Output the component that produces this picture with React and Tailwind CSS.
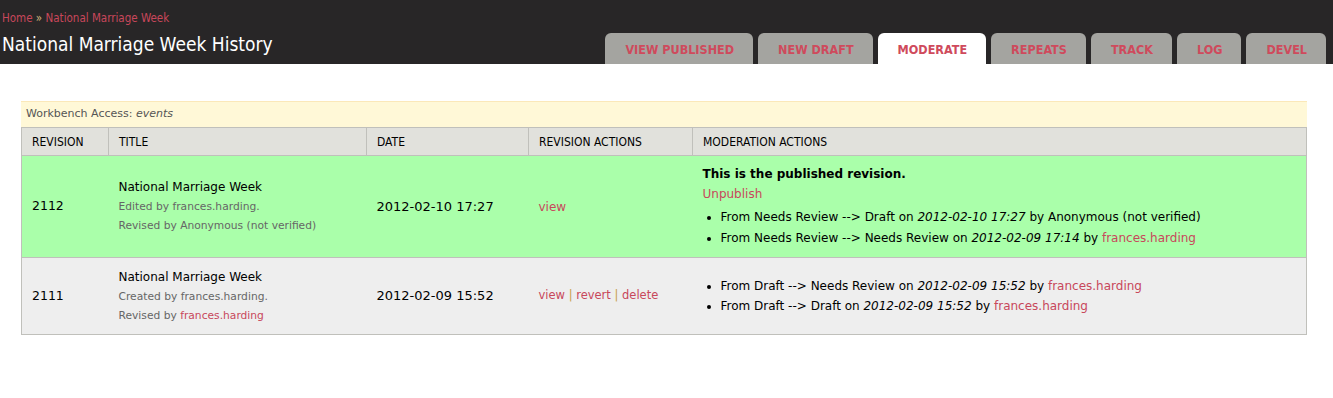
const tabs = ['View published', 'New draft', 'Moderate', 'Repeats', 'Track', 'Log', 'Devel']

function Link({ children }) {
  return <a className="text-[#c8475b] no-underline">{children}</a>
}

export default function App() {
  return (
    <div className="min-h-screen bg-white font-['DejaVu_Sans',sans-serif] text-black">
      {/* Header */}
      <header className="h-16 bg-[#282627] flex items-end justify-between">
        <div className="pl-[2px] pb-[10px]">
          <div className="text-[11.5px] leading-none mb-[11px] font-['DejaVu_Sans_Condensed',sans-serif]">
            <Link>Home</Link> <span className="text-[#cbb27a]">»</span> <Link>National Marriage Week</Link>
          </div>
          <h1 className="text-[19px] leading-none text-white font-['DejaVu_Sans_Condensed',sans-serif]">
            National Marriage Week History
          </h1>
        </div>
        <nav className="flex gap-[5px] pr-[7px]">
          {tabs.map((t) => (
            <a
              key={t}
              className={`h-[31px] flex items-center pt-[3px] pl-[20px] pr-[19px] rounded-t-[6px] text-[12.5px] font-bold uppercase text-[#cf4a5c] font-['DejaVu_Sans_Condensed',sans-serif] ${
                t === 'Moderate' ? 'bg-white' : 'bg-[#a4a4a0]'
              }`}
            >
              {t}
            </a>
          ))}
        </nav>
      </header>

      <main className="px-[21px] pt-[37px] pr-[26px]">
        <div className="h-[26px] bg-[#fff8d7] border-t border-[#fbe8b9] flex items-center px-[5px] text-[11px] text-[#555]">
          Workbench Access:&nbsp;<em>events</em>
        </div>
        <table className="w-full border-collapse text-[12px]">
          <thead>
            <tr className="h-[28px] bg-[#e1e1dc] text-left uppercase font-['DejaVu_Sans_Condensed',sans-serif]">
              <th className="font-normal px-[10px] w-[87px] border border-[#c0c0bb]">Revision</th>
              <th className="font-normal px-[10px] w-[258px] border border-[#c0c0bb]">Title</th>
              <th className="font-normal px-[10px] w-[162px] border border-[#c0c0bb]">Date</th>
              <th className="font-normal px-[10px] w-[164px] border border-[#c0c0bb]">Revision actions</th>
              <th className="font-normal px-[10px] border border-[#c0c0bb]">Moderation actions</th>
            </tr>
          </thead>
          <tbody>
            <tr className="h-[102px] bg-[#aaffaa] border-x border-[#c0c0bb]">
              <td className="px-[10px] text-[12.5px]">2112</td>
              <td className="px-[10px] leading-[19px]">
                <div>National Marriage Week</div>
                <div className="text-[10.7px] text-[#666]">Edited by frances.harding.</div>
                <div className="text-[10.7px] text-[#666]">Revised by Anonymous (not verified)</div>
              </td>
              <td className="px-[10px] text-[13px]">2012-02-10 17:27</td>
              <td className="px-[10px]">
                <Link>view</Link>
              </td>
              <td className="px-[10px] leading-[20px]">
                <div className="font-bold">This is the published revision.</div>
                <div>
                  <Link>Unpublish</Link>
                </div>
                <ul className="list-disc pl-[18px] mt-[3px] leading-[21px]">
                  <li>
                    From Needs Review --&gt; Draft on <em>2012-02-10 17:27</em> by Anonymous (not verified)
                  </li>
                  <li>
                    From Needs Review --&gt; Needs Review on <em>2012-02-09 17:14</em> by <Link>frances.harding</Link>
                  </li>
                </ul>
              </td>
            </tr>
            <tr className="h-[77px] bg-[#eeeeee] border border-[#c0c0bb]">
              <td className="px-[10px] text-[12.5px]">2111</td>
              <td className="px-[10px] leading-[19px]">
                <div>National Marriage Week</div>
                <div className="text-[10.7px] text-[#666]">Created by frances.harding.</div>
                <div className="text-[10.7px] text-[#666]">
                  Revised by <Link>frances.harding</Link>
                </div>
              </td>
              <td className="px-[10px] text-[13px]">2012-02-09 15:52</td>
              <td className="px-[10px] text-[11.5px]">
                <Link>view</Link> <span className="text-[#c8a04b]">|</span> <Link>revert</Link>{' '}
                <span className="text-[#c8a04b]">|</span> <Link>delete</Link>
              </td>
              <td className="px-[10px] leading-[20px]">
                <ul className="list-disc pl-[18px]">
                  <li>
                    From Draft --&gt; Needs Review on <em>2012-02-09 15:52</em> by <Link>frances.harding</Link>
                  </li>
                  <li>
                    From Draft --&gt; Draft on <em>2012-02-09 15:52</em> by <Link>frances.harding</Link>
                  </li>
                </ul>
              </td>
            </tr>
          </tbody>
        </table>
      </main>
    </div>
  )
}
